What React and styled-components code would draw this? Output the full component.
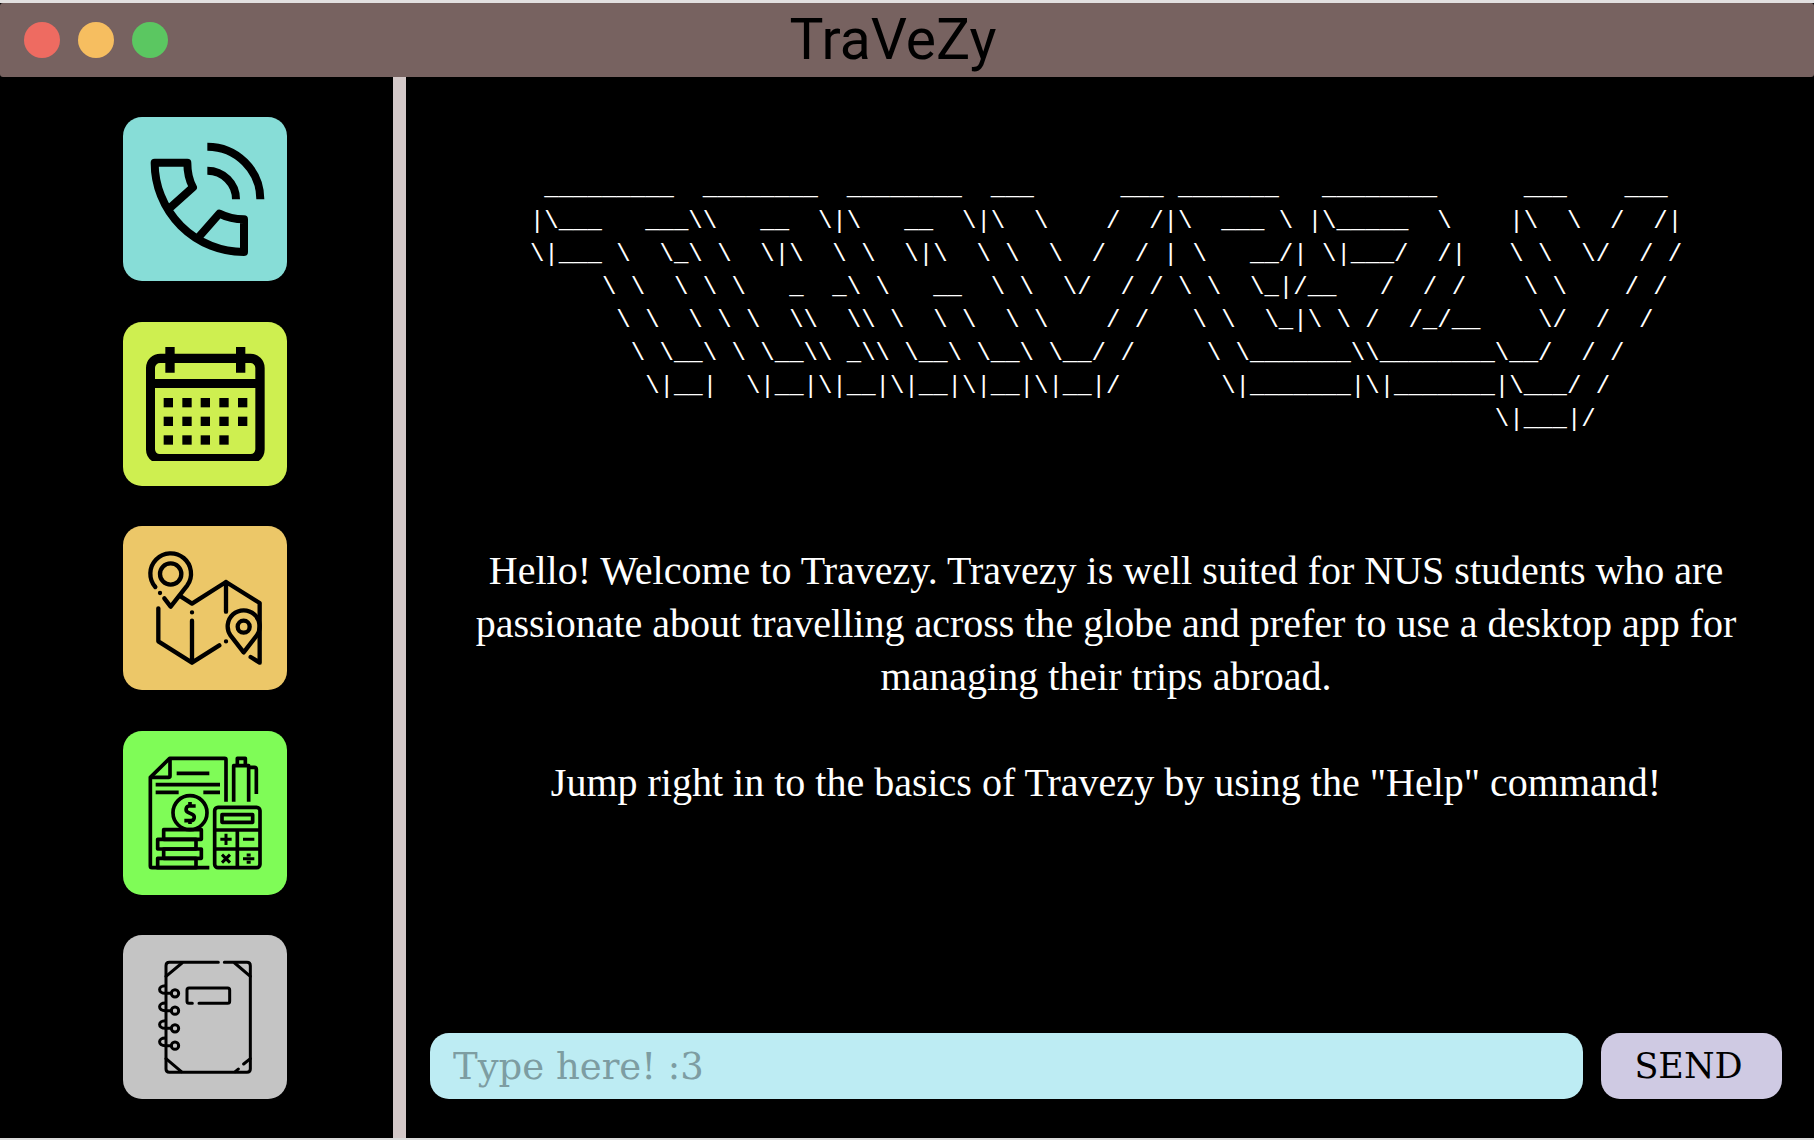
import React from "react";
import styled, { createGlobalStyle } from "styled-components";

const GlobalStyle = createGlobalStyle`
  *, *::before, *::after { box-sizing: border-box; }
  body { margin: 0; background: #000; }
  button, input { font: inherit; }
`;

const Window = styled.div`
  display: flex;
  flex-direction: column;
  min-height: 100vh;
  background: #000;
  border-top: 3px solid #e2e0e0;
  border-bottom: 2px solid #dcdcdc;
`;

const TitleBar = styled.header`
  display: grid;
  grid-template-columns: 1fr auto 1fr;
  align-items: center;
  height: 74px;
  padding: 0 52px 0 24px;
  background: #776260;
  border-radius: 3px;
`;

const Lights = styled.div`
  display: flex;
  gap: 18px;
`;

const Light = styled.button`
  width: 36px;
  height: 36px;
  padding: 0;
  border: 0;
  border-radius: 50%;
  background: ${(p) => p.$color};
`;

const Title = styled.h1`
  margin: 0;
  font: 400 57px/74px Roboto, "Liberation Sans", sans-serif;
  color: #000;
`;

const Body = styled.div`
  display: flex;
  flex: 1;
`;

const Sidebar = styled.nav`
  display: flex;
  flex-direction: column;
  justify-content: space-between;
  gap: 40px;
  width: 406px;
  flex: none;
  padding: 40px 0 39px 123px;
  border-right: 13px solid #d3c8c8;
`;

const Tile = styled.button`
  width: 164px;
  height: 164px;
  padding: 0;
  border: 0;
  border-radius: 19px;
  background: ${(p) => p.$color};
  color: #000;
`;

const Glyph = styled.svg`
  display: block;
  width: 100%;
  height: 100%;
  fill: none;
  stroke: currentColor;
  stroke-width: ${(p) => p.$stroke};
  stroke-linejoin: round;
  stroke-linecap: ${(p) => p.$cap || "butt"};
`;

const Main = styled.main`
  display: flex;
  flex-direction: column;
  flex: 1;
  min-width: 0;
  padding: 95px 32px 39px 24px;
`;

const Banner = styled.pre`
  align-self: center;
  margin: 0;
  font: 400 24px/33px "Liberation Mono", monospace;
  color: #fff;
`;

const Welcome = styled.section`
  display: flex;
  flex-direction: column;
  gap: 53px;
  max-width: 1320px;
  margin: 108px auto 40px;
  text-align: center;
`;

const Paragraph = styled.p`
  margin: 0;
  font: 400 40px/53px "Liberation Serif", serif;
  color: #fff;
`;

const CommandForm = styled.form`
  display: flex;
  gap: 18px;
  margin-top: auto;
  font: 400 35px/42px "DejaVu Serif", serif;
`;

const CommandInput = styled.input`
  flex: 1;
  min-width: 0;
  height: 66px;
  padding: 0 23px;
  border: 0;
  border-radius: 19px;
  background: #bdecf3;
  color: #000;
  font-size: 37px;
  &::placeholder { color: #7d9da2; opacity: 1; }
`;

const SendButton = styled.button`
  width: 181px;
  height: 66px;
  padding: 0 6px 0 0;
  border: 0;
  border-radius: 19px;
  background: #cfcae3;
  color: #000;
`;

const BANNER = [
  String.raw` _________  ________  ________  ___      ___ _______   ________      ___    ___`,
  String.raw`|\___   ___\\   __  \|\   __  \|\  \    /  /|\  ___ \ |\_____  \    |\  \  /  /|`,
  String.raw`\|___ \  \_\ \  \|\  \ \  \|\  \ \  \  /  / | \   __/| \|___/  /|   \ \  \/  / /`,
  String.raw`     \ \  \ \ \   _  _\ \   __  \ \  \/  / / \ \  \_|/__   /  / /    \ \    / /`,
  String.raw`      \ \  \ \ \  \\  \\ \  \ \  \ \    / /   \ \  \_|\ \ /  /_/__    \/  /  /`,
  String.raw`       \ \__\ \ \__\\ _\\ \__\ \__\ \__/ /     \ \_______\\________\__/  / /`,
  String.raw`        \|__|  \|__|\|__|\|__|\|__|\|__|/       \|_______|\|_______|\___/ /`,
  " ".repeat(67) + String.raw`\|___|/`,
].join("\n");

const PhoneIcon = () => (
  <Glyph viewBox="38 37 492 492" $stroke={24} aria-hidden="true">
    <path d="M176 312L248 248C237 228 231 204 231 174H133A268 268 0 0 0 401 442V344C373 344 349 338 327 327L267 395" />
    <path d="M291 126A159 158 0 0 1 450 284M291 198A86 86 0 0 1 377 284" />
  </Glyph>
);

const CalendarIcon = () => (
  <Glyph viewBox="38 36 492 492" $stroke={0} aria-hidden="true">
    <g fill="currentColor" stroke="none">
      <path
        fillRule="evenodd"
        d="M150 131H420A43 43 0 0 1 463 174V417A43 43 0 0 1 445 453H125A43 43 0 0 1 107 417V174A43 43 0 0 1 150 131ZM149 159A15 15 0 0 0 134 174V207H435V174A15 15 0 0 0 420 159ZM134 234V418A14 14 0 0 0 148 432H421A14 14 0 0 0 435 418V234Z"
      />
      <path d="M165 111h28v77h-28zM377 111h28v77h-28z" />
      {[264, 320, 376].map((y, row) =>
        [160, 216, 271, 327, 383]
          .slice(0, row === 2 ? 4 : 5)
          .map((x) => <rect key={`${x}-${y}`} x={x} y={y} width="28" height="28" />)
      )}
    </g>
  </Glyph>
);

const MapIcon = () => (
  <Glyph viewBox="38 34 492 492" $stroke={13} $cap="round" aria-hidden="true">
    <path d="M135 217A61 61 0 1 1 231 212L181 276L162 251" />
    <circle cx="181" cy="178" r="32" />
    <path d="M211 245L245 267L347 202L448 265V444L421 427M347 202V291M144 281V380L245 444V318M245 444L327 392" />
    <path d="M149 235h.1M245 293h.1M347 380h.1" />
    <path d="M400 413L361 363A48 48 0 1 1 439 363Z" />
    <circle cx="400" cy="336" r="18" />
  </Glyph>
);

const BudgetIcon = () => (
  <Glyph viewBox="38 33 492 492" $stroke={11} aria-hidden="true">
    <path d="M297 443H125Q120 443 120 438V172L178 115H343Q347 115 347 119V245" />
    <path d="M120 172H175Q179 172 179 168V115" />
    <path d="M199 160H297M136 194H329M136 217H205M279 217H329" />
    <circle cx="239" cy="278" r="51" />
    <path d="M256 258H237a10 10 0 0 0-4 19l13 6a10 10 0 0 1-4 19H222M239 246v12M239 300v12" />
    <rect x="160" y="329" width="113" height="29" />
    <rect x="142" y="358" width="115" height="29" />
    <rect x="160" y="387" width="113" height="28" />
    <rect x="142" y="415" width="115" height="28" />
    <path d="M370 245V137H415V245M381 137V115H405V137M415 142H432Q438 142 438 148V222" />
    <rect x="313" y="262" width="136" height="181" rx="10" />
    <rect x="335" y="284" width="92" height="23" />
    <path d="M313 330H449M313 387H449M381 330V443" />
    <path d="M330 358h34M347 341v34M398 358h34M335 404l24 24M359 404l-24 24M398 416h34M409 405h12M409 427h12" strokeWidth="9" />
  </Glyph>
);

const NotebookIcon = () => (
  <Glyph viewBox="38 31 492 492" $stroke={9} $cap="round" aria-hidden="true">
    <path d="M324 113H177Q167 113 167 123V433Q167 443 177 443H410Q420 443 420 433V123Q420 113 410 113H342" />
    <path d="M167 155L215 115M373 115L420 155M167 402L213 441M420 402L400 418M384 433L375 441" />
    <path d="M246 236H236Q230 236 230 230V196Q230 190 236 190H352Q358 190 358 196V230Q358 236 352 236H266" />
    {[206, 258, 311, 363].map((y) => (
      <g key={y}>
        <circle cx="194" cy={y} r="11" />
        <path d={`M183 ${y}H165C142 ${y} 142 ${y - 23} 165 ${y - 23}`} />
      </g>
    ))}
  </Glyph>
);

const SECTIONS = [
  { name: "Contacts", color: "#87ddd7", Icon: PhoneIcon },
  { name: "Calendar", color: "#ceef50", Icon: CalendarIcon },
  { name: "Itinerary", color: "#ecc768", Icon: MapIcon },
  { name: "Budget", color: "#7ffc57", Icon: BudgetIcon },
  { name: "Notes", color: "#c4c4c4", Icon: NotebookIcon },
];

export default function App() {
  return (
    <>
      <GlobalStyle />
      <Window>
        <TitleBar>
          <Lights>
            <Light type="button" aria-label="Close" $color="#ee6b61" />
            <Light type="button" aria-label="Minimise" $color="#f6be60" />
            <Light type="button" aria-label="Maximise" $color="#5bc761" />
          </Lights>
          <Title>TraVeZy</Title>
        </TitleBar>
        <Body>
          <Sidebar aria-label="Sections">
            {SECTIONS.map(({ name, color, Icon }) => (
              <Tile key={name} type="button" aria-label={name} $color={color}>
                <Icon />
              </Tile>
            ))}
          </Sidebar>
          <Main>
            <Banner>{BANNER}</Banner>
            <Welcome>
              <Paragraph>
                Hello! Welcome to Travezy. Travezy is well suited for NUS students who are
                passionate about travelling across the globe and prefer to use a desktop app for
                managing their trips abroad.
              </Paragraph>
              <Paragraph>
                Jump right in to the basics of Travezy by using the "Help" command!
              </Paragraph>
            </Welcome>
            <CommandForm onSubmit={(e) => e.preventDefault()}>
              <CommandInput aria-label="Command" placeholder="Type here! :3" />
              <SendButton type="submit">SEND</SendButton>
            </CommandForm>
          </Main>
        </Body>
      </Window>
    </>
  );
}
